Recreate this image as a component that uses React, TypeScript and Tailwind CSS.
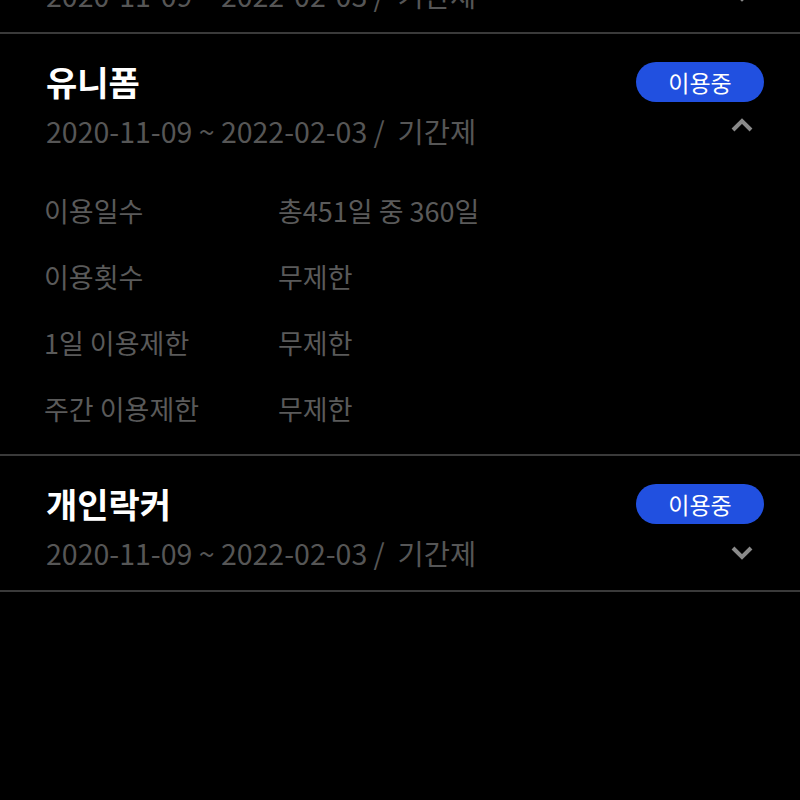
import React from 'react';

type Pass = {
  name: string;
  period: string;
  type: string;
  open: boolean;
  details?: { label: string; value: string }[];
};

const passes: Pass[] = [
  { name: '헬스', period: '2020-11-09 ~ 2022-02-03', type: '기간제', open: false },
  {
    name: '유니폼',
    period: '2020-11-09 ~ 2022-02-03',
    type: '기간제',
    open: true,
    details: [
      { label: '이용일수', value: '총451일 중 360일' },
      { label: '이용횟수', value: '무제한' },
      { label: '1일 이용제한', value: '무제한' },
      { label: '주간 이용제한', value: '무제한' },
    ],
  },
  { name: '개인락커', period: '2020-11-09 ~ 2022-02-03', type: '기간제', open: false },
];

function Chevron({ up }: { up: boolean }) {
  return (
    <svg width="22" height="14" viewBox="0 0 22 14" className="text-[#8a8a8a]">
      <path
        d={up ? 'M2 12 L11 3 L20 12' : 'M2 2 L11 11 L20 2'}
        fill="none"
        stroke="currentColor"
        strokeWidth="4"
      />
    </svg>
  );
}

function PassItem({ pass }: { pass: Pass }) {
  return (
    <div className="border-b-2 border-[#3a3a3a] pl-[46px] pr-[36px] pt-[28px]">
      <div className="flex h-10 items-center justify-between">
        <span className="text-[34px] font-bold leading-none text-white">{pass.name}</span>
        <span className="flex h-10 w-[128px] items-center justify-center rounded-full bg-[#2150e0] text-[23px] text-white">
          이용중
        </span>
      </div>
      <div className="mt-[9px] flex h-10 items-center justify-between">
        <span className="whitespace-pre text-[28.5px] text-[#565656]">
          {pass.period} /  {pass.type}
        </span>
        <span className={`mr-[11px] flex items-center ${pass.open ? 'mb-[12px]' : ''}`}>
          <Chevron up={pass.open} />
        </span>
      </div>
      {pass.open && pass.details ? (
        <div className="mt-[27px] pb-[12px]">
          {pass.details.map((d) => (
            <div
              key={d.label}
              className="-ml-[2px] flex h-[66px] items-center text-[27px] text-[#5a5a5a]"
            >
              <span className="w-[234px]">{d.label}</span>
              <span>{d.value}</span>
            </div>
          ))}
        </div>
      ) : (
        <div className="h-[17px]" />
      )}
    </div>
  );
}

export default function App() {
  return (
    <div
      className="h-[800px] w-[800px] overflow-hidden bg-black"
      style={{ fontFamily: '"Noto Sans CJK KR", "Noto Sans", sans-serif' }}
    >
      <div className="-mt-[102px]">
        {passes.map((p) => (
          <PassItem key={p.name} pass={p} />
        ))}
      </div>
    </div>
  );
}
